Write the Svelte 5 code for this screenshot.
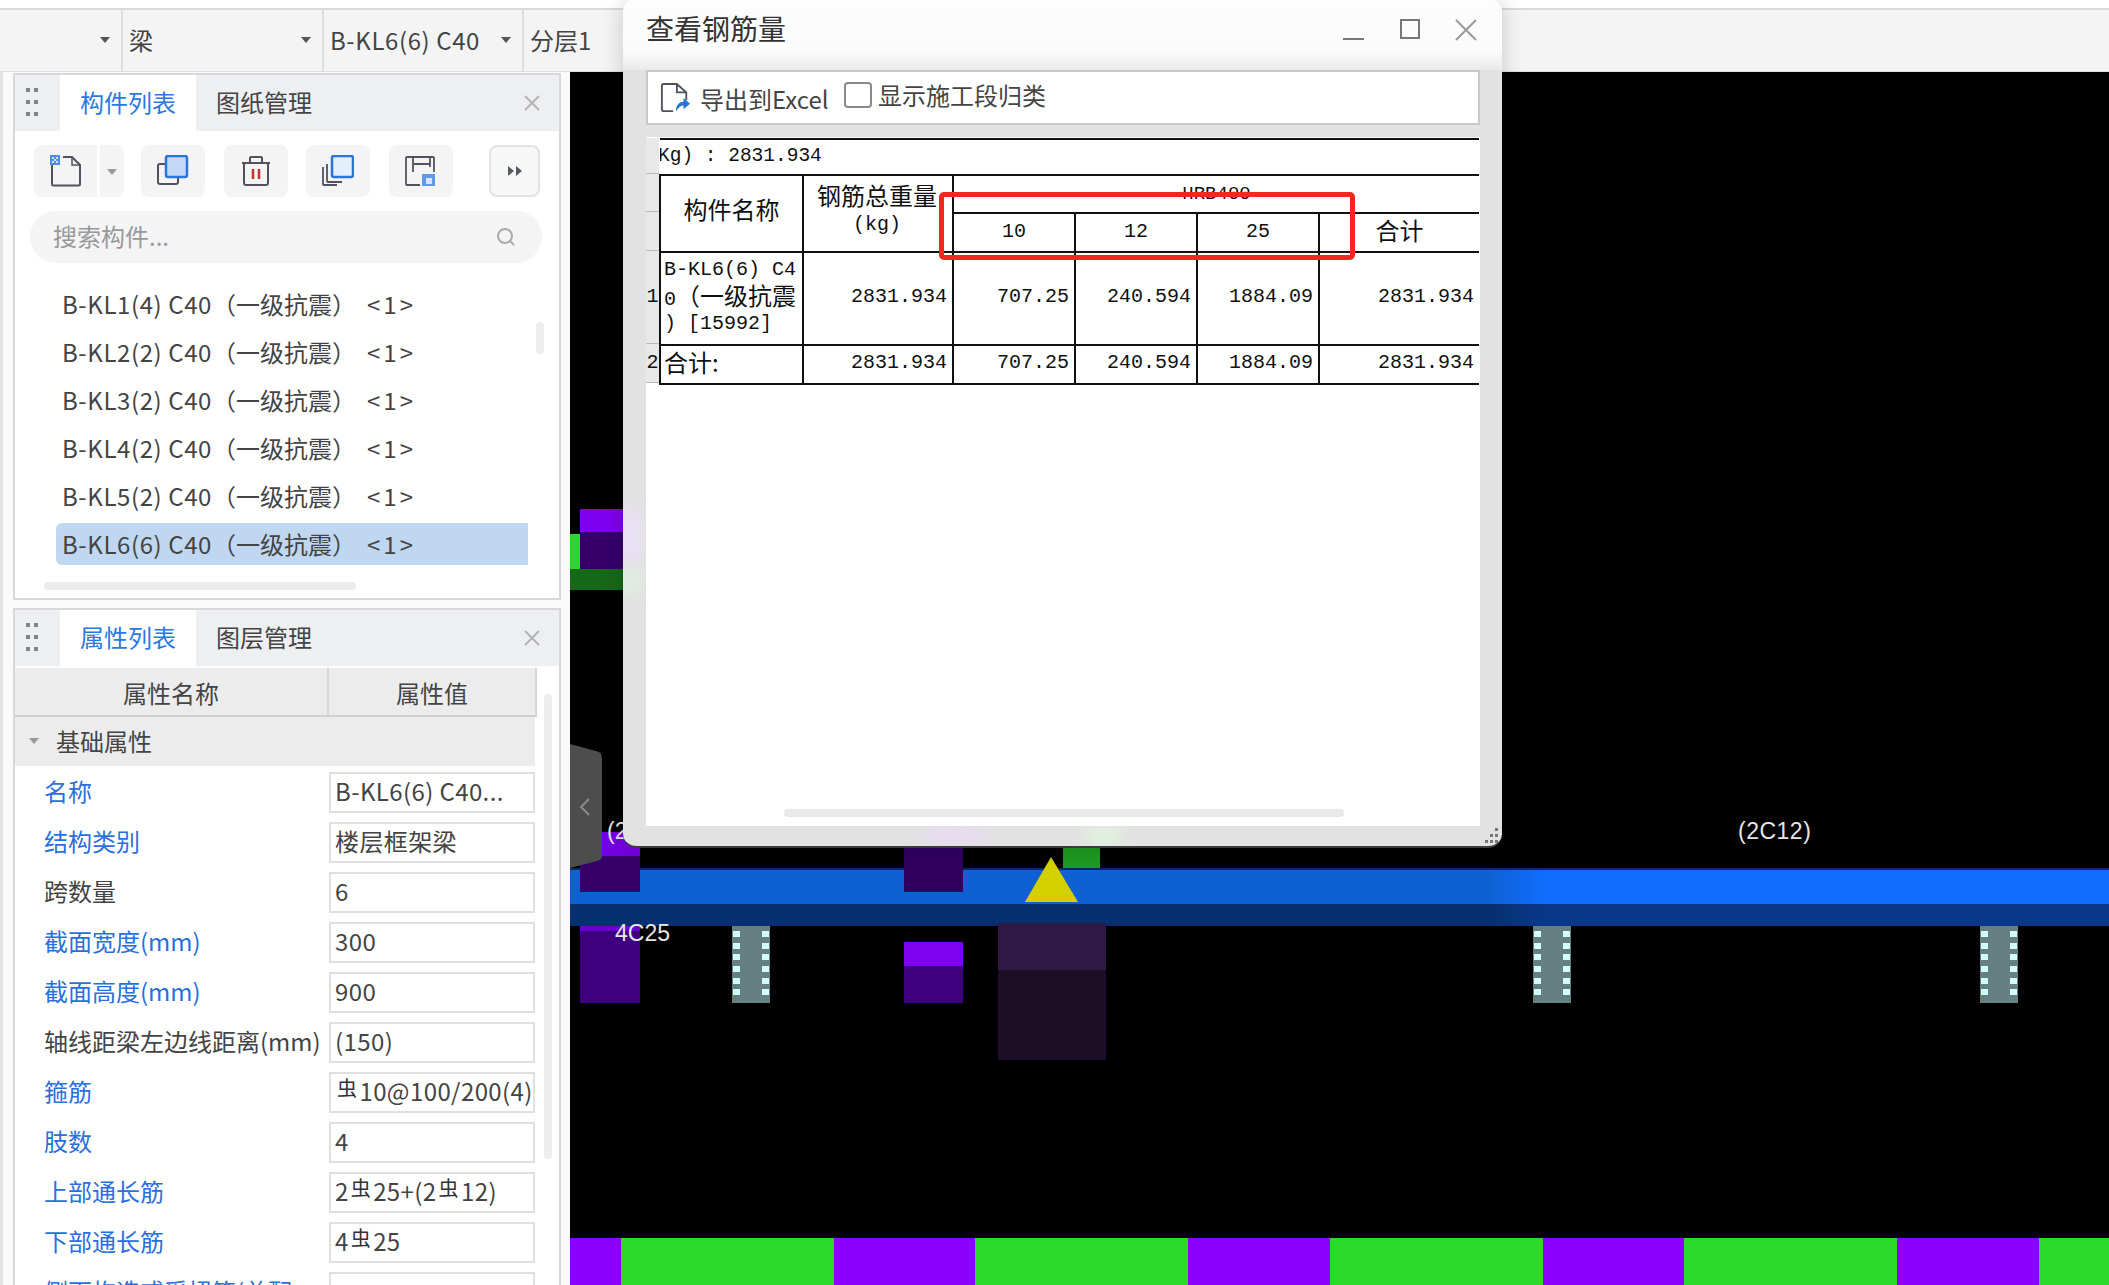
<script>
  const components = ['B-KL1(4)', 'B-KL2(2)', 'B-KL3(2)', 'B-KL4(2)', 'B-KL5(2)', 'B-KL6(6)'];
  const props = [
    { name: '名称', value: 'B-KL6(6) C40...', link: true },
    { name: '结构类别', value: '楼层框架梁', link: true },
    { name: '跨数量', value: '6' },
    { name: '截面宽度(mm)', value: '300', link: true },
    { name: '截面高度(mm)', value: '900', link: true },
    { name: '轴线距梁左边线距离(mm)', value: '(150)' },
    { name: '箍筋', value: '', parts: [['s', '虫'], ['t', '10@100/200(4)']], link: true },
    { name: '肢数', value: '4', link: true },
    { name: '上部通长筋', value: '', parts: [['t', '2'], ['s', '虫'], ['t', '25+(2'], ['s', '虫'], ['t', '12)']], link: true },
    { name: '下部通长筋', value: '', parts: [['t', '4'], ['s', '虫'], ['t', '25']], link: true },
    { name: '侧面构造或受扭筋(总配', value: '', link: true }
  ];
  const stripes = [
    ['p', 51], ['g', 213], ['p', 141], ['g', 213], ['p', 142], ['g', 213],
    ['p', 141], ['g', 213], ['p', 142], ['g', 70]
  ];
  const columns = [732, 1533, 1980];
  const dots = [0, 1, 2, 3, 4, 5];
</script>

<div class="page">
  <div class="topline"></div>
  <div class="toolbar">
    <div class="combo c1"><span></span><i class="caret"></i></div>
    <div class="combo c2"><span>梁</span><i class="caret"></i></div>
    <div class="combo c3"><span class="code">B-KL6(6) C40</span><i class="caret"></i></div>
    <div class="combo c4"><span>分层1</span></div>
  </div>

  <div class="main">
    <aside class="side">
      <section class="panel list-panel">
        <header class="tabs">
          <div class="grip">{#each dots as d}<b></b>{/each}</div>
          <div class="tab active">构件列表</div>
          <div class="tab">图纸管理</div>
          <svg class="close" viewBox="0 0 16 16"><path d="M1 1l14 14M15 1L1 15" /></svg>
        </header>
        <div class="tools">
          <div class="tbtn split">
            <svg viewBox="0 0 32 32" width="32" height="32">
              <path d="M2 9v20a1.5 1.5 0 0 0 1.5 1.500h25a1.500 1.500 0 0 0 1.500-1.500V10l-8-8H13" fill="none" stroke="#50535f" stroke-width="2" />
              <path d="M22 2v8h8" fill="none" stroke="#50535f" stroke-width="1.500" />
              <rect x="0" y="0" width="10" height="10" fill="#4e8fe6" />
              <path d="M2 2h2v2H2zM6 2h2v2H6zM4 4h2v2H4zM2 6h2v2H2zM6 6h2v2H6z" fill="#cfe0f7" />
            </svg>
          </div>
          <div class="tdrop"><i class="caret soft"></i></div>
          <div class="tbtn">
            <svg viewBox="0 0 32 32" width="32" height="32">
              <rect x="1" y="9" width="20" height="20" rx="2" fill="none" stroke="#50535f" stroke-width="2" />
              <rect x="9" y="1" width="21" height="21" rx="2" fill="#c3d8f4" stroke="#2a75d6" stroke-width="2.500" />
            </svg>
          </div>
          <div class="tbtn">
            <svg viewBox="0 0 32 32" width="32" height="32">
              <path d="M2 8h28M10 7V3a1 1 0 0 1 1-1h10a1 1 0 0 1 1 1v4M4 8v20a2 2 0 0 0 2 2h20a2 2 0 0 0 2-2V8" fill="none" stroke="#50535f" stroke-width="2" />
              <path d="M13 14v10M19 14v10" stroke="#c9302c" stroke-width="2.500" />
            </svg>
          </div>
          <div class="tbtn">
            <svg viewBox="0 0 32 32" width="32" height="32">
              <path d="M1 12v17a1 1 0 0 0 1 1h13M5 9v17a1 1 0 0 0 1 1h14" fill="none" stroke="#50535f" stroke-width="1.800" />
              <rect x="10" y="1" width="21" height="21" rx="2" fill="#e4effc" stroke="#2a75d6" stroke-width="2.500" />
            </svg>
          </div>
          <div class="tbtn">
            <svg class="save" viewBox="0 0 32 32" width="32" height="32">
              <path d="M16 30H3a1 1 0 0 1-1-1V3a1 1 0 0 1 1-1h26a1 1 0 0 1 1 1v14M9 2v15M26 2v10M9 9h17" fill="none" stroke="#50535f" stroke-width="1.800" />
              <rect x="18" y="19" width="13" height="12" fill="#5f9ae6" />
              <rect x="22" y="23" width="6" height="6" fill="#d6e5f8" />
            </svg>
          </div>
          <div class="tmore">
            <svg viewBox="0 0 14 10" width="14" height="10"><path d="M0 0l6 5-6 5zM8 0l6 5-6 5z" fill="#555a66" /></svg>
          </div>
        </div>
        <div class="search">
          <span>搜索构件...</span>
          <svg viewBox="0 0 20 20" width="20" height="20"><circle cx="9" cy="9" r="7" fill="none" stroke="#aaa" stroke-width="2" /><path d="M14 14l4 4" stroke="#aaa" stroke-width="2" /></svg>
        </div>
        <ul class="items">
          {#each components as c, i}
            <li class:selected={i === components.length - 1}>
              <span class="label"><span class="code">{c} C40</span>（一级抗震）</span><span class="count">&lt;1&gt;</span>
            </li>
          {/each}
        </ul>
        <div class="vthumb"></div>
        <div class="hthumb"></div>
      </section>

      <section class="panel prop-panel">
        <header class="tabs">
          <div class="grip">{#each dots as d}<b></b>{/each}</div>
          <div class="tab active">属性列表</div>
          <div class="tab">图层管理</div>
          <svg class="close" viewBox="0 0 16 16"><path d="M1 1l14 14M15 1L1 15" /></svg>
        </header>
        <div class="prop-head"><div>属性名称</div><div>属性值</div></div>
        <div class="group"><i class="caret soft"></i>基础属性</div>
        {#each props as p}
          <div class="prop">
            <div class="pname" class:link={p.link}>{p.name}</div>
            <div class="pvalue">
              {#if p.parts}
                {#each p.parts as part}
                  {#if part[0] === 's'}<span class="steel">{part[1]}</span>{:else}{part[1]}{/if}
                {/each}
              {:else}
                {p.value}
              {/if}
            </div>
          </div>
        {/each}
        <div class="pthumb"></div>
      </section>
    </aside>

    <div class="canvas">
      <div class="shape" style="left:0;top:462px;width:10px;height:35px;background:#2ad82a"></div>
      <div class="shape" style="left:10px;top:437px;width:50px;height:23px;background:#7f00f0"></div>
      <div class="shape" style="left:10px;top:460px;width:50px;height:37px;background:#36006b"></div>
      <div class="shape" style="left:0;top:497px;width:60px;height:21px;background:#176817"></div>

      <div class="shape" style="left:493px;top:776px;width:37px;height:22px;background:#1f9a1f"></div>

      <div class="beam"><div class="beam-top"></div><div class="beam-bottom"></div></div>

      <div class="shape" style="left:10px;top:760px;width:60px;height:24px;background:#7600e0"></div>
      <div class="shape" style="left:10px;top:784px;width:60px;height:36px;background:#36006b"></div>
      <div class="shape" style="left:334px;top:776px;width:59px;height:44px;background:#30005f"></div>

      <svg class="shape" style="left:455px;top:785px" width="53" height="45" viewBox="0 0 53 45"><path d="M26 0L53 45H0z" fill="#d4d000" /></svg>

      <div class="shape" style="left:10px;top:854px;width:60px;height:5px;background:#6a00d0"></div>
      <div class="shape" style="left:10px;top:859px;width:60px;height:72px;background:#3f0080"></div>
      <div class="shape" style="left:334px;top:870px;width:59px;height:24px;background:#8000f0"></div>
      <div class="shape" style="left:334px;top:894px;width:59px;height:37px;background:#3f0080"></div>
      <div class="shape" style="left:428px;top:851px;width:108px;height:47px;background:#2f1a45"></div>
      <div class="shape" style="left:428px;top:898px;width:108px;height:90px;background:#1c0e26"></div>

      {#each columns as x}
        <div class="post" style="left:{x - 570}px">
          {#each dots as d}<div class="post-row"><i></i><i></i></div>{/each}
        </div>
      {/each}

      <span class="cad t1">4C25</span>
      <span class="cad t2">(2C12)</span>
      <span class="cad t3">(2</span>

      <div class="stripes">
        {#each stripes as s}
          <div class={s[0] === 'p' ? 'sp' : 'sg'} style="width:{s[1]}px"></div>
        {/each}
      </div>

      <svg class="flap" width="32" height="124" viewBox="0 0 32 124">
        <path d="M0 0L26 7Q32 8 32 14V112Q32 116 27 117L0 124z" fill="#4d4d4d" />
        <path d="M19 55l-8 8 8 8" fill="none" stroke="#8a8a8a" stroke-width="2" />
      </svg>
    </div>
  </div>

  <div class="dialog">
    <div class="side-tint" style="top:512px;height:54px;background:#eadff5"></div>
    <div class="side-tint" style="top:570px;height:24px;background:#e0eee0"></div>
    <div class="dtitle">
      <span>查看钢筋量</span>
      <div class="winctl">
        <svg width="22" height="22" viewBox="0 0 22 22"><path d="M0 20h21" stroke="#777" stroke-width="2" /></svg>
        <svg width="22" height="22" viewBox="0 0 22 22"><rect x="2" y="1" width="18" height="18" fill="none" stroke="#777" stroke-width="2" /></svg>
        <svg width="22" height="22" viewBox="0 0 22 22"><path d="M1 1l20 20M21 1L1 21" stroke="#999" stroke-width="2" /></svg>
      </div>
    </div>
    <div class="dbar">
      <svg class="export" width="32" height="32" viewBox="0 0 32 32">
        <path d="M14 30H4a2 2 0 0 1-2-2V3a2 2 0 0 1 2-2h14l10 9v8M18 1v9h10" fill="none" stroke="#50535f" stroke-width="2" />
        <path d="M17 30c0-7 4-10 8-10v-4l7 6-7 6v-4c-3 0-5 2-8 6z" fill="#2a75d6" />
      </svg>
      <span class="exp-text">导出到Excel</span>
      <i class="check"></i>
      <span class="chk-text">显示施工段归类</span>
    </div>
    <div class="sheet">
      <div class="rowhead">
        <div style="height:36px"></div>
        <div style="height:38px"></div>
        <div style="height:39px"></div>
        <div style="height:93px">1</div>
        <div style="height:39px">2</div>
      </div>
      <table>
        <colgroup>
          <col style="width:143px" /><col style="width:150px" /><col style="width:122px" />
          <col style="width:122px" /><col style="width:122px" /><col style="width:160px" />
        </colgroup>
        <tbody>
          <tr class="r0"><td colspan="6" class="left"><span class="clip">Kg) : 2831.934</span></td></tr>
          <tr class="r1">
            <td rowspan="2" class="cn title-cell">构件名称</td>
            <td rowspan="2" class="cn weight">钢筋总重量<br /><span class="mono kg">(kg)</span></td>
            <td colspan="4" class="mono hrb">HRB400</td>
          </tr>
          <tr class="r2">
            <td class="mono size">10</td><td class="mono size">12</td><td class="mono size">25</td><td class="cn total">合计</td>
          </tr>
          <tr class="r3">
            <td class="name">
              <div class="mono">B-KL6(6) C4</div>
              <div class="mid"><span class="mono">0</span>（一级抗震</div>
              <div class="mono">) [15992]</div>
            </td>
            <td class="num">2831.934</td><td class="num">707.25</td><td class="num">240.594</td><td class="num">1884.09</td><td class="num">2831.934</td>
          </tr>
          <tr class="r4">
            <td class="name sum">合计:</td>
            <td class="num">2831.934</td><td class="num">707.25</td><td class="num">240.594</td><td class="num">1884.09</td><td class="num">2831.934</td>
          </tr>
        </tbody>
      </table>
      <div class="redbox"></div>
      <div class="sheet-thumb"></div>
    </div>
    <div class="dfoot">
      <div class="tint" style="left:281px;width:59px;background:#e8dcf2"></div>
      <div class="tint" style="left:440px;width:37px;background:#e2f2e0"></div>
      <svg class="sizer" width="16" height="16" viewBox="0 0 16 16"><path d="M12 0h3v3h-3zM7 6h3v3H7zM12 6h3v3h-3zM2 12h3v3H2zM7 12h3v3H7zM12 12h3v3h-3z" fill="#777" /></svg>
    </div>
  </div>
</div>

<style>
  :global(body) {
    margin: 0;
    background: #fff;
  }

  .page {
    position: relative;
    width: 2109px;
    height: 1285px;
    overflow: hidden;
    font-family: "Noto Sans CJK SC", "Liberation Sans", sans-serif;
    font-size: 24px;
    color: #444;
    background: #fff;
  }

  .topline {
    box-sizing: border-box;
    height: 10px;
    border-bottom: 2px solid #d9d9db;
  }

  .toolbar {
    display: flex;
    height: 62px;
    background: #f4f4f5;
    border-bottom: 1px solid #ddd;
    box-sizing: border-box;
  }

  .combo {
    position: relative;
    box-sizing: border-box;
    padding-left: 6px;
    border-right: 2px solid #dedee0;
    line-height: 59px;
    white-space: nowrap;
  }

  .c1 { width: 123px; }
  .c2 { width: 201px; }
  .c3 { width: 200px; }
  .c4 { width: 100px; border: none; }

  .code { letter-spacing: 0.6px; }

  .caret {
    position: absolute;
    right: 11px;
    top: 27px;
    border-left: 5px solid transparent;
    border-right: 5px solid transparent;
    border-top: 6px solid #555;
  }

  .main {
    display: flex;
    height: 1213px;
  }

  .side {
    box-sizing: border-box;
    width: 570px;
    padding: 1px 9px 0 10px;
    display: flex;
    flex-direction: column;
    gap: 8px;
    background: #fafafa;
    border-left: 3px solid #e2e2e2;
  }

  .panel {
    position: relative;
    box-sizing: border-box;
    background: #fff;
    border: 2px solid #d8d8da;
    flex: none;
  }

  .list-panel { height: 527px; }
  .prop-panel { height: 680px; border-bottom: none; overflow: hidden; }

  .tabs {
    position: relative;
    display: flex;
    height: 56px;
    padding-left: 45px;
    background: #eeeff1;
    align-items: stretch;
  }

  .grip {
    position: absolute;
    left: 11px;
    top: 13px;
    display: grid;
    grid-template-columns: 4px 4px;
    grid-auto-rows: 4px;
    gap: 8px 4px;
  }

  .grip b { background: #80838a; }

  .tab {
    width: 136px;
    line-height: 54px;
    text-align: center;
    color: #444;
  }

  .tab.active {
    background: #fff;
    color: #2a78e0;
  }

  .close {
    position: absolute;
    right: 19px;
    top: 20px;
    width: 16px;
    height: 16px;
    stroke: #b4b4b4;
    stroke-width: 2;
  }

  .tools {
    display: flex;
    height: 52px;
    margin: 14px 0 0 19px;
  }

  .tbtn {
    box-sizing: border-box;
    width: 64px;
    height: 52px;
    margin-right: 18.500px;
    background: #f4f4f5;
    border-radius: 8px;
    display: flex;
    align-items: center;
    justify-content: center;
  }

  .save { margin-left: -2px; }

  .tbtn.split {
    width: 63px;
    margin-right: 3px;
    border-radius: 8px 0 0 8px;
  }

  .tdrop {
    position: relative;
    width: 24px;
    height: 52px;
    margin-right: 17px;
    background: #f4f4f5;
    border-radius: 0 8px 8px 0;
  }

  .caret.soft {
    right: 7px;
    top: 24px;
    border-top-color: #999;
  }

  .tmore {
    box-sizing: border-box;
    width: 51px;
    height: 52px;
    margin-left: 18px;
    border: 2px solid #e2e2e4;
    border-radius: 8px;
    background: #f7f7f8;
    display: flex;
    align-items: center;
    justify-content: center;
  }

  .search {
    display: flex;
    align-items: center;
    justify-content: space-between;
    box-sizing: border-box;
    width: 512px;
    height: 52px;
    margin: 14px 0 0 15px;
    padding: 0 26px 0 23px;
    border-radius: 26px;
    background: #f4f4f5;
    color: #999;
  }

  .search span { margin-top: -4px; }

  .items {
    list-style: none;
    margin: 20px 0 0 41px;
    padding: 0;
    width: 472px;
  }

  .items li {
    height: 42px;
    margin-bottom: 6px;
    padding-left: 6px;
    line-height: 42px;
    white-space: nowrap;
    border-radius: 6px 0 0 6px;
    display: flex;
  }

  .items li.selected { background: #bfd7f0; }

  .label { width: 305px; }
  .count { letter-spacing: 3px; }

  .vthumb {
    position: absolute;
    left: 521px;
    top: 247px;
    width: 8px;
    height: 32px;
    border-radius: 4px;
    background: #eee;
  }

  .hthumb {
    position: absolute;
    left: 29px;
    top: 507px;
    width: 312px;
    height: 8px;
    border-radius: 4px;
    background: #ececec;
  }

  .prop-head {
    display: flex;
    width: 522px;
    height: 49px;
    margin-top: 2px;
    background: #ececed;
    border-bottom: 2px solid #d0d0d2;
    box-sizing: border-box;
    text-align: center;
    line-height: 49px;
  }

  .prop-head div:first-child {
    width: 312px;
    border-right: 2px solid #d6d6d8;
  }

  .prop-head div:last-child { flex: 1; border-right: 2px solid #d6d6d8; }

  .group {
    position: relative;
    width: 520px;
    height: 49px;
    padding-left: 41px;
    box-sizing: border-box;
    background: #ececed;
    line-height: 47px;
  }

  .group .caret {
    left: 14px;
    right: auto;
    top: 21px;
  }

  .prop {
    display: flex;
    height: 50px;
    align-items: center;
    width: 520px;
    white-space: nowrap;
    padding-top: 3px;
    box-sizing: border-box;
  }

  .pname {
    width: 314px;
    padding-left: 29px;
    box-sizing: border-box;
    margin-top: -4px;
  }

  .pname.link { color: #2a6fdc; }

  .pvalue {
    box-sizing: border-box;
    width: 206px;
    height: 41px;
    padding-left: 4px;
    line-height: 33px;
    border: 2px solid #e0e0e2;
    overflow: hidden;
    letter-spacing: 0.4px;
  }

  .steel {
    font-size: 20px;
    position: relative;
    top: -5px;
    margin: 0 2px;
    color: #333;
  }

  .pthumb {
    position: absolute;
    left: 529px;
    top: 84px;
    width: 8px;
    height: 465px;
    border-radius: 4px;
    background: #ededed;
  }

  .canvas {
    position: relative;
    flex: 1;
    background: #000;
    overflow: hidden;
  }

  .shape { position: absolute; }

  .beam {
    position: absolute;
    left: 0;
    right: 0;
    top: 796px;
    border-top: 2px solid #0a2a60;
  }

  .beam-top {
    height: 34px;
    background: linear-gradient(90deg, #0f60d2 0, #0f60d2 918px, #106eff 975px);
  }

  .beam-bottom {
    height: 22px;
    background: linear-gradient(90deg, #06306f 0, #06306f 918px, #093889 975px);
  }

  .post {
    position: absolute;
    top: 854px;
    width: 38px;
    height: 77px;
    padding-top: 5px;
    box-sizing: border-box;
    background: #667f80;
  }

  .post-row {
    display: flex;
    justify-content: space-between;
    height: 6px;
    margin: 0 1px 5.700px;
  }

  .post-row i {
    width: 7px;
    background: #d2fbfb;
  }

  .cad {
    position: absolute;
    color: #e6e6e6;
    font-family: "Liberation Sans", sans-serif;
    font-size: 23px;
    line-height: 28px;
    font-weight: 400;
  }

  .t1 { left: 45px; top: 847px; }
  .t2 { left: 1168px; top: 745px; letter-spacing: 0.5px; }
  .t3 { left: 37px; top: 745px; }

  .stripes {
    position: absolute;
    left: 0;
    right: 0;
    bottom: 0;
    height: 47px;
    display: flex;
  }

  .sp { background: #8b00ff; }
  .sg { background: #2bd92b; }

  .flap {
    position: absolute;
    left: 0;
    top: 672px;
  }

  .dialog {
    position: absolute;
    left: 623px;
    top: -2px;
    width: 879px;
    height: 850px;
    box-sizing: border-box;
    padding: 0 22px 0 23px;
    display: flex;
    flex-direction: column;
    border-radius: 14px;
    background: #e2e2e2;
    border-bottom: 2px solid #3c3c3c;
    overflow: hidden;
    box-shadow: 0 0 22px rgba(0, 0, 0, 0.18);
  }

  .side-tint {
    position: absolute;
    left: -6px;
    width: 24px;
    filter: blur(7px);
  }

  .dtitle {
    flex: none;
    display: flex;
    align-items: center;
    justify-content: space-between;
    height: 72px;
    margin: 0 -22px 0 -23px;
    padding: 0 25px 12px 23px;
    box-sizing: border-box;
    background: linear-gradient(#fdfdfd 0, #fbfbfb 75%, #e9e9e9 100%);
    font-size: 28px;
    color: #333;
  }

  .winctl {
    display: flex;
    gap: 34px;
    margin-top: 4px;
  }

  .dbar {
    flex: none;
    box-sizing: border-box;
    height: 55px;
    display: flex;
    align-items: center;
    background: #fff;
    border: 2px solid #c8c8cc;
  }

  .export { margin-left: 12px; width: 30px; height: 30px; }

  .exp-text {
    margin: 2px 0 0 10px;
    width: 144px;
  }

  .check {
    box-sizing: border-box;
    width: 28px;
    height: 26px;
    margin-top: -6px;
    border: 2px solid #8a8a8a;
    border-radius: 4px;
  }

  .chk-text { margin: -6px 0 0 6px; }

  .sheet {
    position: relative;
    flex: none;
    height: 689px;
    margin-top: 12px;
    background: #fff;
    display: flex;
    align-items: flex-start;
    overflow: hidden;
  }

  .rowhead {
    flex: none;
    width: 13px;
    margin-top: 1px;
    font-family: "Liberation Mono", monospace;
    font-size: 20px;
    line-height: 20px;
    color: #111;
    background: #fff;
  }

  .rowhead div {
    box-sizing: border-box;
    background: #e8e8e8;
    border-bottom: 1px solid #bbb;
    display: flex;
    align-items: center;
    justify-content: center;
  }

  table {
    border-collapse: collapse;
    table-layout: fixed;
    width: 819px;
    color: #111;
    font-family: "Liberation Mono", "Noto Sans CJK SC", monospace;
    font-size: 20px;
    line-height: 20px;
    margin-top: 1px;
  }

  td {
    box-sizing: border-box;
    padding: 0;
    border: 2px solid #111;
    text-align: center;
    overflow: hidden;
  }

  tr > td:last-child { border-right: none; }

  .r0 td { height: 36px; }
  .r1 td { height: 38px; }
  .r2 td { height: 39px; }
  .r3 td { height: 93px; }
  .r4 td { height: 39px; }

  .left { text-align: left; border-left: none; padding-bottom: 2px; text-indent: -2px; }
  .clip { white-space: nowrap; font-size: 19.500px; }
  .cn { font-family: "Noto Sans CJK SC", sans-serif; font-size: 24px; line-height: 24px; padding-bottom: 2px; }
  .title-cell { padding-bottom: 9px; }
  .total { padding-bottom: 6px; }
  .weight { line-height: 28px; vertical-align: top; padding: 5px 2px 0 0; white-space: nowrap; }
  .mono { font-family: "Liberation Mono", monospace; font-size: 20px; }
  .kg { position: relative; top: -3px; }
  .hrb { font-size: 19px; vertical-align: top; padding-top: 8px; }
  .size { padding-bottom: 2px; }

  .name {
    text-align: left;
    padding-left: 3px;
    padding-bottom: 4px;
    font-family: "Noto Sans CJK SC", sans-serif;
    font-size: 24px;
    line-height: 24px;
    white-space: nowrap;
  }

  .name div { height: 27px; line-height: 27px; }
  .name .mid { position: relative; top: -2px; }
  .sum { padding-bottom: 6px; }

  .num {
    text-align: right;
    padding-right: 5px;
    padding-bottom: 3px;
  }

  .redbox {
    position: absolute;
    left: 293px;
    top: 55px;
    width: 416px;
    height: 68px;
    box-sizing: border-box;
    border: 5px solid #f0281e;
    border-radius: 5px;
  }

  .sheet-thumb {
    position: absolute;
    left: 138px;
    top: 672px;
    width: 560px;
    height: 8px;
    border-radius: 4px;
    background: #e9e9e9;
  }

  .dfoot {
    position: relative;
    flex: 1;
    overflow: hidden;
    margin-right: -22px;
    margin-left: -1px;
  }

  .tint {
    position: absolute;
    top: 0;
    bottom: 0;
    filter: blur(8px);
  }

  .sizer {
    position: absolute;
    right: 3px;
    bottom: 2px;
  }
</style>
